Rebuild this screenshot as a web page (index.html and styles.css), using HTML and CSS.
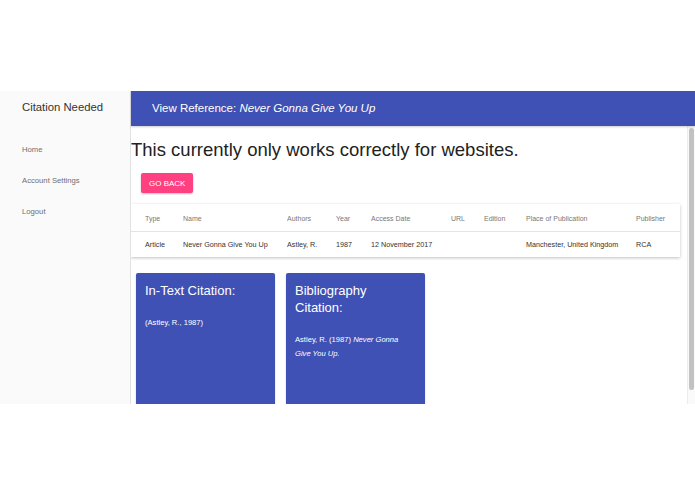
FILE: index.html
```html
<!DOCTYPE html>
<html>
<head>
<meta charset="utf-8">
<link rel="stylesheet" href="styles.css">
</head>
<body>
<div class="app">
  <aside class="sidebar">
    <div class="brand">Citation Needed</div>
    <nav class="menu">
      <a class="menu-item">Home</a>
      <a class="menu-item">Account Settings</a>
      <a class="menu-item">Logout</a>
    </nav>
  </aside>
  <div class="main">
    <header class="topbar">View Reference: <em>Never Gonna Give You Up</em></header>
    <div class="body-row">
      <div class="content">
        <h1 class="notice">This currently only works correctly for websites.</h1>
        <button class="back">GO BACK</button>
        <div class="table-card">
          <table class="ref-table">
            <colgroup>
              <col class="c-type"><col class="c-name"><col class="c-auth"><col class="c-year"><col class="c-date"><col class="c-url"><col class="c-ed"><col class="c-place"><col class="c-pub">
            </colgroup>
            <thead>
              <tr><th>Type</th><th>Name</th><th>Authors</th><th>Year</th><th>Access Date</th><th>URL</th><th>Edition</th><th>Place of Publication</th><th>Publisher</th></tr>
            </thead>
            <tbody>
              <tr><td>Article</td><td>Never Gonna Give You Up</td><td>Astley, R.</td><td>1987</td><td>12 November 2017</td><td></td><td></td><td>Manchester, United Kingdom</td><td>RCA</td></tr>
            </tbody>
          </table>
        </div>
        <div class="cards">
          <div class="cite-card">
            <h2 class="cite-title">In-Text Citation:</h2>
            <p class="cite-body">(Astley, R., 1987)</p>
          </div>
          <div class="cite-card">
            <h2 class="cite-title">Bibliography Citation:</h2>
            <p class="cite-body"><span>Astley, R. (1987)</span> <em>Never Gonna Give You Up.</em></p>
          </div>
        </div>
      </div>
      <div class="scrollbar"><div class="thumb"></div></div>
    </div>
  </div>
</div>
</body>
</html>
```

FILE: styles.css
```css
html, body {
  margin: 0;
  padding: 0;
  background: #ffffff;
  font-family: "Liberation Sans", Arial, sans-serif;
}

.app {
  margin-top: 91px;
  height: 313px;
  display: flex;
  overflow: hidden;
}

.sidebar {
  width: 130px;
  flex: none;
  background: #fafafa;
  border-right: 1px solid #e2e2e2;
  display: flex;
  flex-direction: column;
}

.brand {
  height: 35px;
  line-height: 33px;
  padding-left: 22px;
  font-size: 11.3px;
  color: #333;
}

.menu {
  display: flex;
  flex-direction: column;
  padding-top: 16px;
}

.menu-item {
  height: 31px;
  line-height: 16px;
  padding-left: 22px;
  font-size: 7.7px;
  color: #6f6f6f;
}

.main {
  flex: 1;
  display: flex;
  flex-direction: column;
  min-width: 0;
}

.topbar {
  height: 35px;
  flex: none;
  background: #3f51b5;
  color: #fff;
  font-size: 11.5px;
  line-height: 34px;
  padding-left: 21px;
  box-shadow: 0 1px 2px rgba(0,0,0,0.2);
  position: relative;
  z-index: 1;
}

.body-row {
  flex: 1;
  display: flex;
  min-height: 0;
}

.content {
  flex: 1;
  min-width: 0;
  overflow: hidden;
}

.scrollbar {
  width: 8px;
  flex: none;
  background: #fafafa;
  border-left: 1px solid #ececec;
  box-sizing: border-box;
  padding: 2px 1px 14px 1px;
}

.thumb {
  height: 100%;
  background: #c2c2c2;
  border-radius: 3px;
}

.notice {
  margin: 13px 0 0 0;
  font-size: 18.5px;
  font-weight: normal;
  line-height: 22px;
  color: #222;
}

.back {
  display: block;
  margin: 12px 0 0 10px;
  height: 20px;
  padding: 0 8px;
  border: none;
  border-radius: 2px;
  background: #ff4081;
  color: #fff;
  font-family: inherit;
  font-size: 8px;
  box-shadow: 0 1px 2px rgba(0,0,0,0.25);
}

.table-card {
  margin: 11px 7px 0 0;
  background: #fff;
  box-shadow: 0 1px 3px rgba(0,0,0,0.25);
}

.ref-table {
  width: 100%;
  border-collapse: collapse;
  table-layout: fixed;
}

.c-type { width: 52px; }
.c-name { width: 104px; }
.c-auth { width: 49px; }
.c-year { width: 35px; }
.c-date { width: 80px; }
.c-url { width: 33px; }
.c-ed { width: 42px; }
.c-place { width: 110px; }

.ref-table th, .ref-table td {
  text-align: left;
  padding: 0;
  white-space: nowrap;
  overflow: hidden;
}

.ref-table th:first-child, .ref-table td:first-child {
  padding-left: 14px;
}

.ref-table th {
  height: 26px;
  font-size: 7px;
  font-weight: normal;
  color: #777;
  border-bottom: 1px solid #e4e4e4;
  padding-top: 1px;
}

.ref-table td {
  height: 25px;
  font-size: 7.2px;
  color: #333;
}

.cards {
  display: flex;
  gap: 11px;
  margin: 16px 0 0 5px;
}

.cite-card {
  width: 116px;
  height: 145px;
  padding: 9px 14px 9px 9px;
  background: #3f51b5;
  border-radius: 2px;
  color: #fff;
  box-shadow: 0 1px 2px rgba(0,0,0,0.2);
}

.cite-title {
  margin: 0;
  font-size: 13px;
  font-weight: normal;
  line-height: 17px;
}

.cite-body {
  margin: 17px 0 0 0;
  font-size: 7.6px;
  line-height: 14px;
}
```
